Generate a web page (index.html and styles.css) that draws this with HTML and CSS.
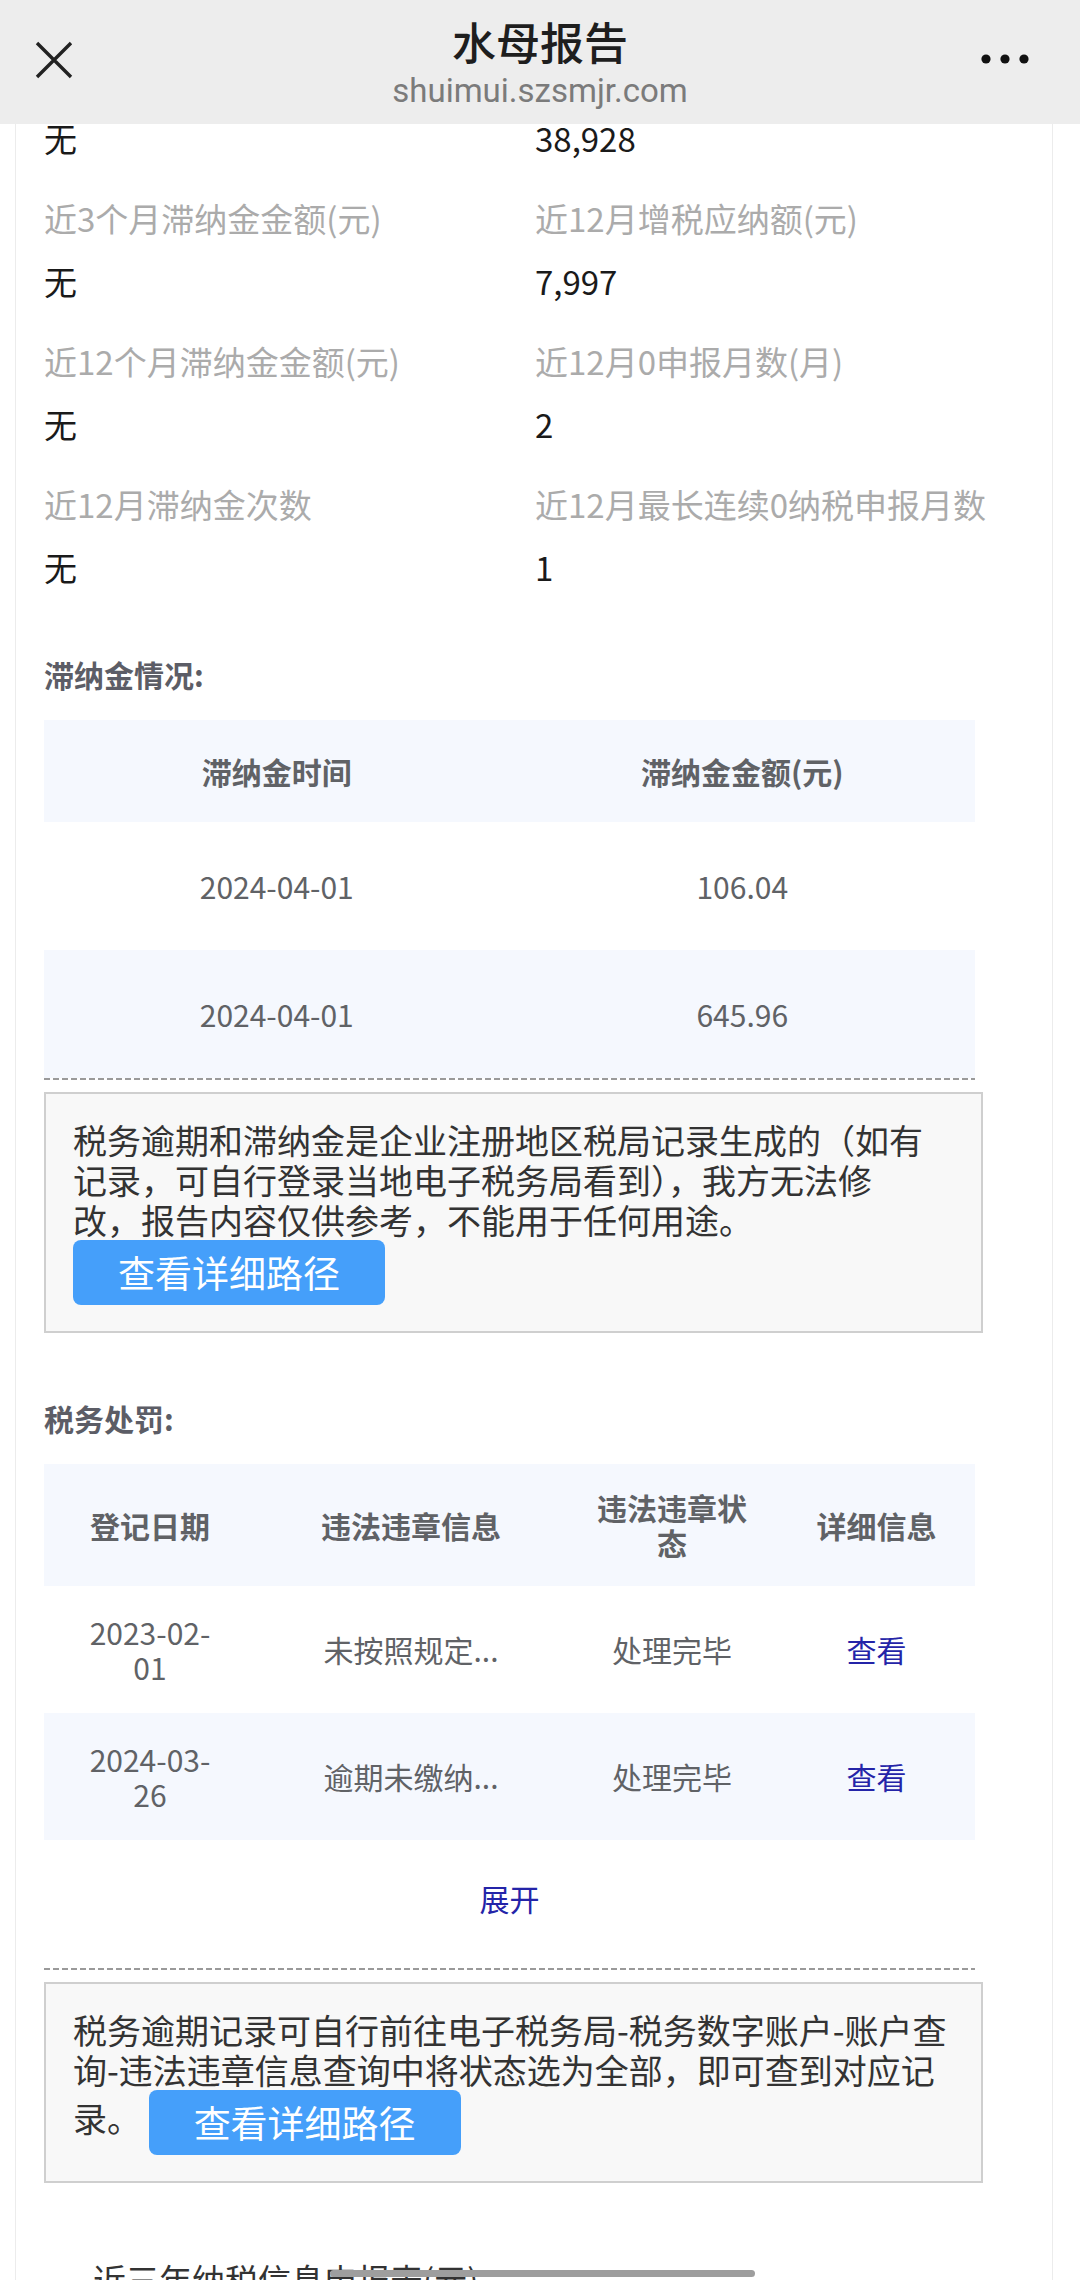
FILE: index.html
```html
<!DOCTYPE html>
<html lang="zh-CN">
<head>
    <meta charset="UTF-8">
    <meta name="viewport" content="width=device-width, initial-scale=1.0">
    <title>水母报告</title>
    <link rel="stylesheet" href="styles.css">
</head>
<body>
<header class="topbar">
    <svg class="topbar-close" width="38" height="38" viewBox="0 0 38 38">
        <path d="M2 2 L36 36 M36 2 L2 36" stroke="#222" stroke-width="3.4" fill="none"/>
    </svg>
    <div class="topbar-title">
        <div class="topbar-name">水母报告</div>
        <div class="topbar-url">shuimui.szsmjr.com</div>
    </div>
    <svg class="topbar-more" width="48" height="12" viewBox="0 0 48 12">
        <circle cx="5" cy="6" r="4.6" fill="#111"/>
        <circle cx="24" cy="6" r="4.6" fill="#111"/>
        <circle cx="43" cy="6" r="4.6" fill="#111"/>
    </svg>
</header>

<main class="report">
    <div class="stats">
        <div class="stat"><div class="stat-value">无</div></div>
        <div class="stat"><div class="stat-value">38,928</div></div>
        <div class="stat">
            <div class="stat-label">近3个月滞纳金金额(元)</div>
            <div class="stat-value">无</div>
        </div>
        <div class="stat">
            <div class="stat-label">近12月增税应纳额(元)</div>
            <div class="stat-value">7,997</div>
        </div>
        <div class="stat">
            <div class="stat-label">近12个月滞纳金金额(元)</div>
            <div class="stat-value">无</div>
        </div>
        <div class="stat">
            <div class="stat-label">近12月0申报月数(月)</div>
            <div class="stat-value">2</div>
        </div>
        <div class="stat">
            <div class="stat-label">近12月滞纳金次数</div>
            <div class="stat-value">无</div>
        </div>
        <div class="stat">
            <div class="stat-label">近12月最长连续0纳税申报月数</div>
            <div class="stat-value">1</div>
        </div>
    </div>

    <h3 class="section-title">滞纳金情况:</h3>
    <table class="data-table late-table">
        <colgroup><col style="width:50%"><col style="width:50%"></colgroup>
        <thead>
            <tr><th>滞纳金时间</th><th>滞纳金金额(元)</th></tr>
        </thead>
        <tbody>
            <tr><td>2024-04-01</td><td>106.04</td></tr>
            <tr><td>2024-04-01</td><td>645.96</td></tr>
        </tbody>
    </table>
    <div class="dash"></div>
    <div class="notice">
        税务逾期和滞纳金是企业注册地区税局记录生成的（如有记录，可自行登录当地电子税务局看到），我方无法修<br>改，报告内容仅供参考，不能用于任何用途。
        <a class="notice-btn">查看详细路径</a>
    </div>

    <h3 class="section-title">税务处罚:</h3>
    <table class="data-table penalty-table">
        <colgroup><col class="c-date"><col class="c-info"><col class="c-state"><col class="c-more"></colgroup>
        <thead>
            <tr><th class="cell-date">登记日期</th><th>违法违章信息</th><th>违法违章状态</th><th>详细信息</th></tr>
        </thead>
        <tbody>
            <tr>
                <td class="cell-date">2023-02-01</td>
                <td>未按照规定...</td>
                <td>处理完毕</td>
                <td><a class="link">查看</a></td>
            </tr>
            <tr>
                <td class="cell-date">2024-03-26</td>
                <td>逾期未缴纳...</td>
                <td>处理完毕</td>
                <td><a class="link">查看</a></td>
            </tr>
        </tbody>
    </table>
    <div class="expand"><a class="link">展开</a></div>
    <div class="dash dash-gap"></div>
    <div class="notice">
        税务逾期记录可自行前往电子税务局-税务数字账户-账户查询-违法违章信息查询中将状态选为全部，即可查到对应记录。
        <a class="notice-btn">查看详细路径</a>
    </div>

    <h3 class="section-next">近三年纳税信息申报表(元)</h3>
</main>

<div class="scroll-thumb"></div>
</body>
</html>
```

FILE: styles.css
```css
html, body {
    margin: 0;
    height: 2280px;
    overflow: hidden;
}
body {
    font-family: "Noto Sans CJK SC", "Noto Sans", sans-serif;
    background-color: #fff;
    color: #1a1a1a;
}

/* top bar */
.topbar {
    position: fixed;
    top: 0;
    left: 0;
    right: 0;
    height: 124px;
    background-color: #ededed;
    display: grid;
    grid-template-columns: 1fr auto 1fr;
    align-items: center;
    z-index: 10;
}
.topbar-close {
    justify-self: start;
    margin-left: 35px;
    margin-bottom: 4px;
}
.topbar-more {
    justify-self: end;
    margin-right: 51px;
    margin-bottom: 6px;
}
.topbar-title {
    text-align: center;
    padding-top: 2px;
}
.topbar-name {
    font-size: 44px;
    font-weight: 500;
    line-height: 52px;
    color: #1e1e1e;
}
.topbar-url {
    font-family: Roboto, "Noto Sans", sans-serif;
    font-size: 33px;
    line-height: 40px;
    margin-top: 4px;
    color: #7b7b7b;
}

/* report card */
.report {
    box-sizing: border-box;
    min-height: 2280px;
    margin-left: 15px;
    width: 1038px;
    padding: 116px 0 0 28px;
    border-left: 1px solid #ececec;
    border-right: 1px solid #ececec;
}

.stats {
    display: grid;
    grid-template-columns: 491px 1fr;
    row-gap: 36px;
}
.stat-label {
    font-size: 33px;
    line-height: 44px;
    color: #ababab;
    margin-bottom: 19px;
    white-space: nowrap;
}
.stat-value {
    font-size: 33px;
    line-height: 44px;
    color: #1a1a1a;
}

.section-title {
    margin: 63px 0 24px 0;
    font-size: 30px;
    line-height: 44px;
    font-weight: bold;
    color: #5c5d66;
}

/* tables */
.data-table {
    width: 931px;
    border-collapse: collapse;
    table-layout: fixed;
    font-size: 30px;
    line-height: 35px;
    color: #606266;
    text-align: center;
}
.data-table th {
    font-weight: bold;
    background-color: #f5f8fe;
    padding: 0 28px;
}
.data-table td {
    padding: 0 28px;
}
.data-table tbody tr:nth-child(even) td {
    background-color: #f5f8fe;
}
.late-table th {
    height: 102px;
}
.late-table td {
    height: 128px;
}
.penalty-table th {
    height: 122px;
}
.penalty-table td {
    height: 127px;
}
.penalty-table .c-date { width: 212px; }
.penalty-table .c-info { width: 310px; }
.penalty-table .c-state { width: 212px; }
.penalty-table .c-more { width: 197px; }
.penalty-table .cell-date {
    padding: 0 32px;
}

.link {
    color: #2424a8;
    cursor: pointer;
}
.expand {
    width: 931px;
    margin-top: 36px;
    text-align: center;
    font-size: 30px;
    line-height: 44px;
}

.dash {
    width: 931px;
    height: 2px;
    background: repeating-linear-gradient(to right, #9a9a9a 0, #9a9a9a 6px, transparent 6px, transparent 9px);
}
.dash-gap {
    margin-top: 48px;
}

/* notice boxes */
.notice {
    box-sizing: border-box;
    width: 939px;
    margin-top: 12px;
    padding: 26px 30px 26px 27px;
    border: 2px solid #cfcfcf;
    background-color: #f8f8f8;
    font-size: 34px;
    line-height: 40px;
    color: #333;
}
.notice-btn {
    display: inline-block;
    vertical-align: middle;
    height: 65px;
    line-height: 65px;
    padding: 0 45px;
    font-size: 37px;
    color: #fff;
    background-color: #459ffa;
    border-radius: 8px;
    cursor: pointer;
}

.section-next {
    margin: 76px 0 0 49px;
    font-size: 33px;
    line-height: 40px;
    font-weight: normal;
    color: #333;
}

.scroll-thumb {
    position: fixed;
    left: 330px;
    top: 2270px;
    width: 425px;
    height: 7px;
    border-radius: 4px;
    background-color: #9e9e9e;
}
```
